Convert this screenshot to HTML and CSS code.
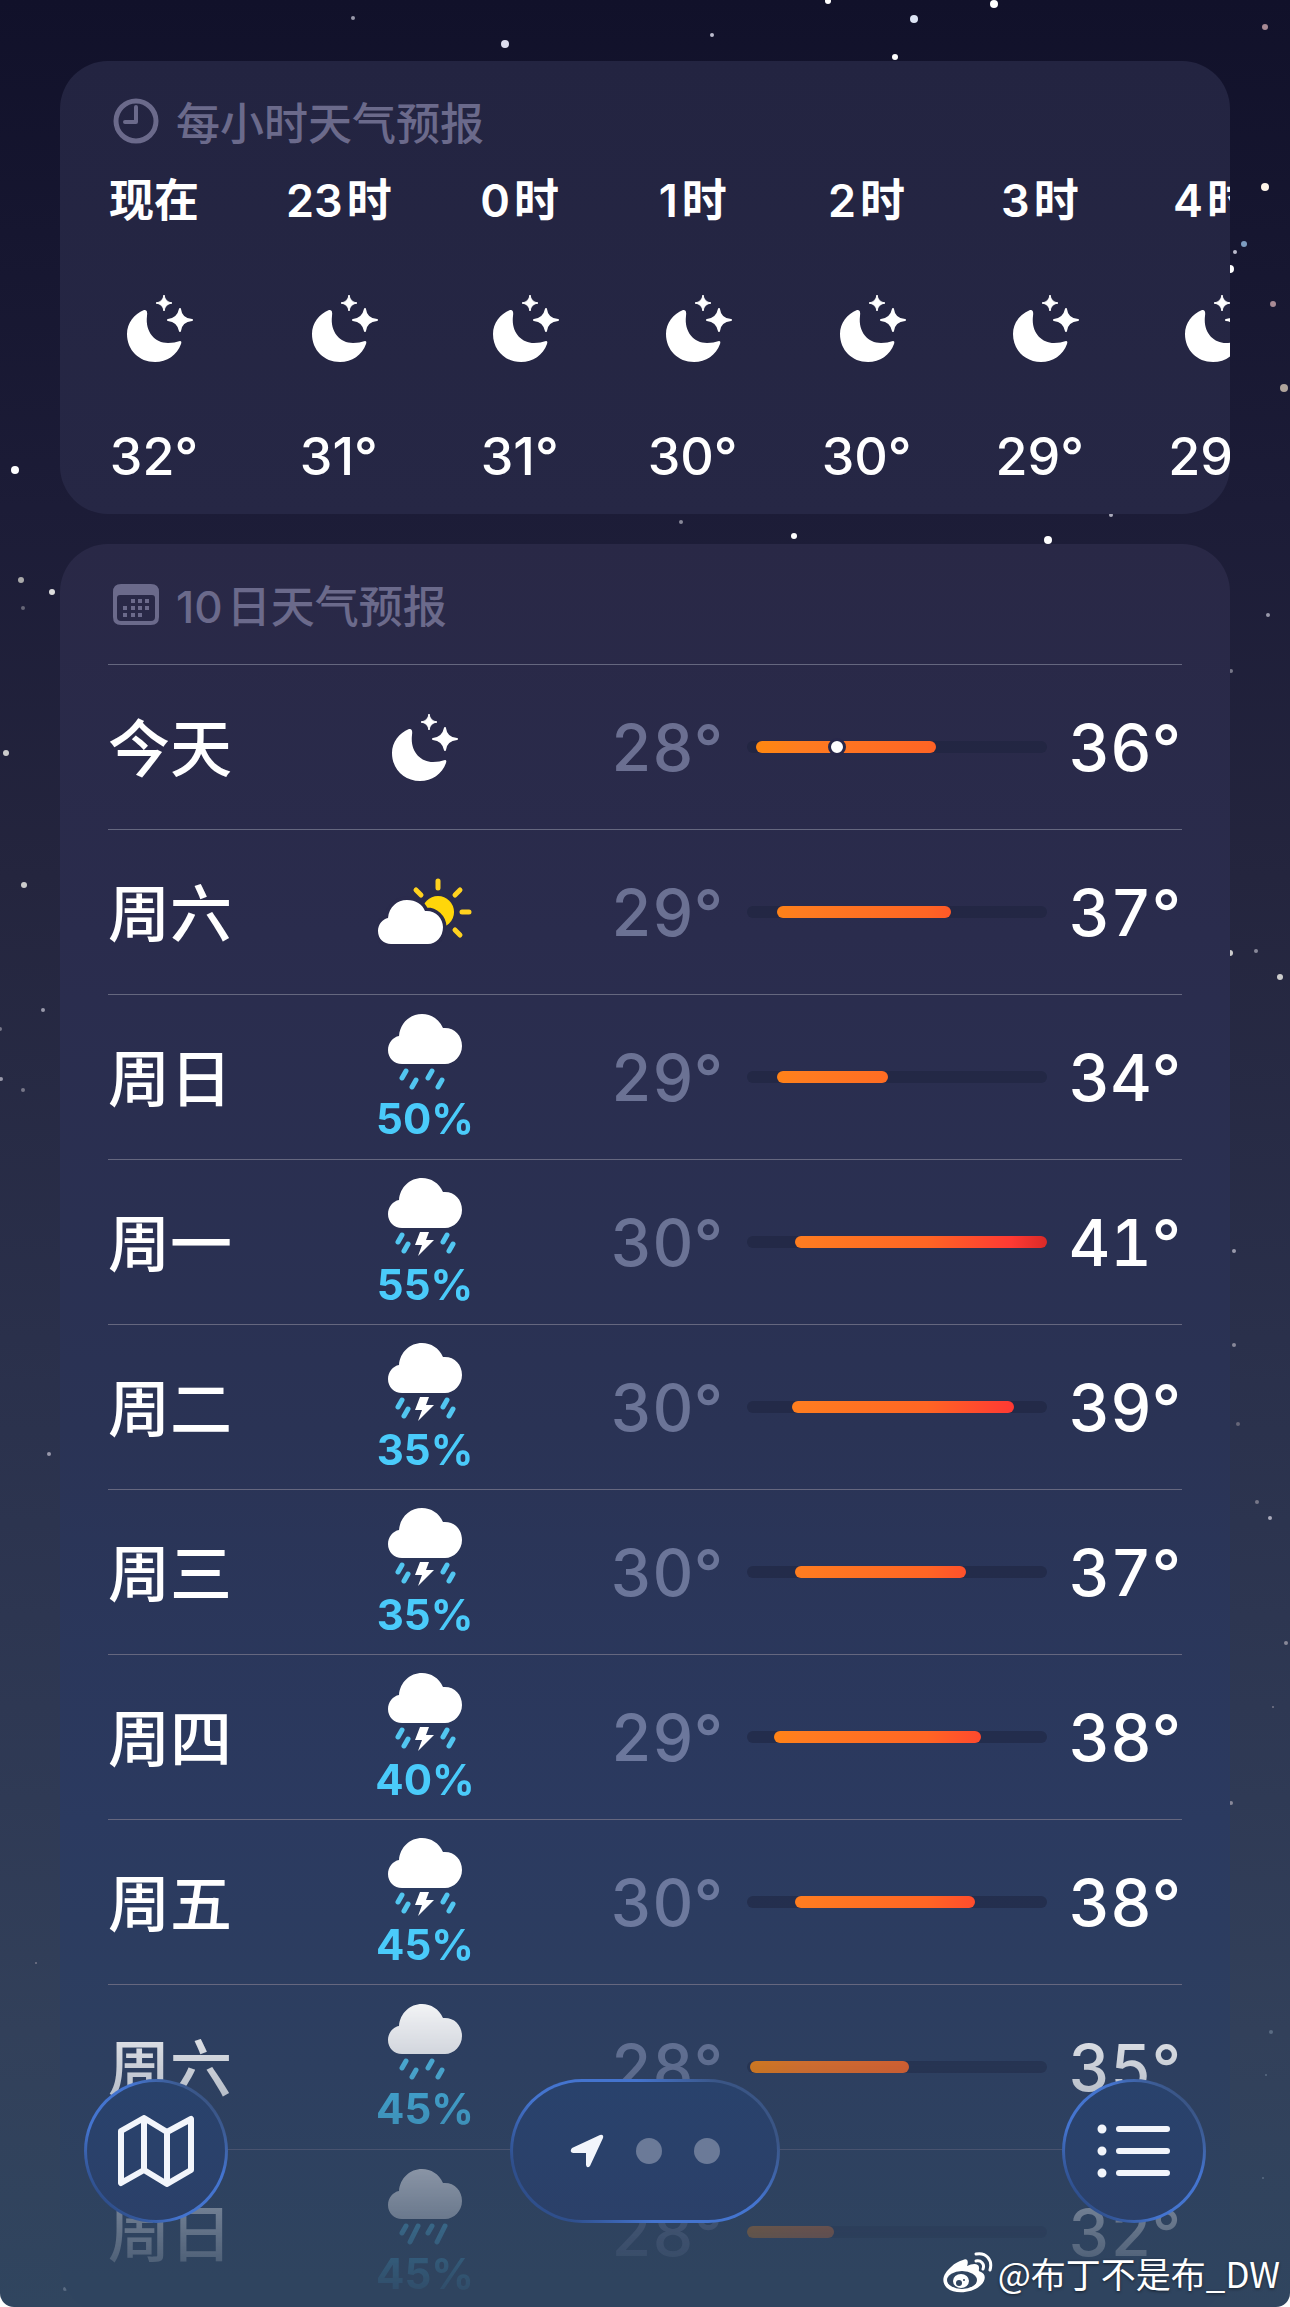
FILE: index.html
```html
<!DOCTYPE html>
<html lang="zh-CN">
<head>
    <meta charset="UTF-8">
    <meta name="viewport" content="width=device-width, initial-scale=1.0">
    <title>天气</title>
    <link rel="stylesheet" href="styles.css">
</head>
<body>

    <!-- icon shapes, reused below -->
    <svg class="defs" aria-hidden="true">
        <symbol id="moon" viewBox="0 0 66 67">
            <path d="M20 17C18 33 28 44 41 44C46 44 49 43 53 42Q55 42 54 45C50 56 40 63 28 63C12 63 0 51 0 35C0 24 7 15 17 11Q21 10 20 17Z" transform="translate(0 4)"/>
            <path d="M37 0Q38 7 45 8Q38 9 37 16Q36 9 29 8Q36 7 37 0Z" stroke="#fff" stroke-width="1"/>
            <path d="M53 14Q54 24 65 25Q54 26 53 36Q51 26 41 25Q51 24 53 14Z" stroke="#fff" stroke-width="2" stroke-linejoin="round"/>
        </symbol>
        <symbol id="cloud" viewBox="0 0 74 50">
            <path d="M14 50C6 50 0 44 0 36C0 29 5 23 11 22C12 9 22 0 34 0C43 0 51 5 55 14C66 13 74 21 74 32C74 42 66 50 57 50Z"/>
        </symbol>
        <symbol id="partly" viewBox="0 0 94 68">
            <g stroke="#ffd21f" stroke-width="5" stroke-linecap="round">
                <path d="M60 3V10M82 12L77 17M84 34H91M82 57L77 52M38 12L43 17"/>
            </g>
            <circle cx="60" cy="34" r="16" fill="#ffd60a"/>
            <path class="cut" d="M13 66C6 66 0 61 0 53C0 46 5 41 10 40C11 29 19 22 29 22C38 22 44 26 47 33C57 32 65 40 65 49C65 59 58 66 50 66Z"/>
            <path fill="#fff" d="M13 66C6 66 0 61 0 53C0 46 5 41 10 40C11 29 19 22 29 22C38 22 44 26 47 33C57 32 65 40 65 49C65 59 58 66 50 66Z"/>
        </symbol>
        <symbol id="rain" viewBox="0 0 74 76">
            <use href="#cloud" width="74" height="50"/>
            <path class="drops" d="M18 57L14 64M28 66L24 73M44 57L40 64M54 66L50 73"/>
        </symbol>
        <symbol id="heavy" viewBox="0 0 74 76">
            <use href="#cloud" width="74" height="50"/>
            <path class="drops" d="M18 57L14 64M30 57L22 73M44 57L40 64M57 57L49 73"/>
        </symbol>
        <symbol id="storm" viewBox="0 0 74 78">
            <use href="#cloud" width="74" height="50"/>
            <path class="drops" d="M14 57L10 64M20 66L16 73M59 57L55 64M65 66L61 73"/>
            <path d="M32 54H41L38 62H46L30 78L34 67H27Z"/>
        </symbol>
    </svg>

    <div class="screen">
        <svg class="stars" id="stars" aria-hidden="true"></svg>

        <main class="cards">
            <section class="card hourly">
                <h2 class="card-title">
                    <svg class="title-icon" viewBox="0 0 46 46"><circle cx="23" cy="23" r="20" fill="none" stroke="currentColor" stroke-width="5"/><path d="M23 9V24H12" fill="none" stroke="currentColor" stroke-width="4" stroke-linecap="round" stroke-linejoin="round"/></svg>
                    每小时天气预报
                </h2>
                <ol class="hours" id="hours"></ol>
            </section>

            <section class="card daily">
                <h2 class="card-title">
                    <svg class="title-icon" viewBox="0 0 46 46"><path fill="currentColor" fill-rule="evenodd" d="M8 3H38Q46 3 46 11V36Q46 44 38 44H8Q0 44 0 36V11Q0 3 8 3ZM7 14Q4 14 4 17V36Q4 40 8 40H38Q42 40 42 36V17Q42 14 39 14Z"/><path d="M18 20h4M25 20h4M32 20h4M10 27h4M18 27h4M25 27h4M32 27h4M10 34h4M18 34h4M25 34h4" stroke="currentColor" stroke-width="4"/></svg>
                    <span>10<span class="unit">日天气预报</span></span>
                </h2>
                <ol class="days" id="days"></ol>
            </section>
        </main>

        <nav class="toolbar">
            <button class="glass round" type="button" aria-label="地图">
                <svg width="76" height="72" viewBox="0 0 76 72" fill="none" stroke="currentColor" stroke-width="6" stroke-linejoin="round"><path d="M3 16L26 3L49 17L73 4V55L49 69L26 55L3 68ZM26 3V55M49 17V69"/></svg>
            </button>
            <div class="glass pager">
                <svg width="34" height="34" viewBox="0 0 34 34" fill="currentColor"><path d="M2 14L30 1Q34 0 33 4L20 32Q17 35 16 31V19H3Q-1 18 2 14Z"/></svg>
                <span class="dot"></span>
                <span class="dot"></span>
            </div>
            <button class="glass round" type="button" aria-label="城市列表">
                <svg width="74" height="54" viewBox="0 0 74 54" fill="none" stroke="currentColor" stroke-width="6" stroke-linecap="round"><path d="M22 5H70M22 27H70M22 49H70"/><path d="M5 5h0M5 27h0M5 49h0" stroke-width="9"/></svg>
            </button>
        </nav>

        <p class="watermark">
            <svg width="50" height="42" viewBox="0 0 50 42"><path fill="#fff" d="M20 8C24 6 26 9 24 14C30 11 37 11 36 17C36 18 35 19 38 20C43 22 43 28 38 33C30 41 12 43 4 36C-3 29 1 21 8 15C12 11 16 9 20 8Z"/><ellipse cx="19" cy="28" rx="15" ry="9" fill="#30445f"/><ellipse cx="18" cy="29" rx="8" ry="7" fill="#fff"/><circle cx="16" cy="31" r="3" fill="#30445f"/><circle cx="21" cy="28" r="1" fill="#30445f"/><path d="M33 2C43 0 50 8 47 18M33 9C38 8 42 12 40 17" fill="none" stroke="#fff" stroke-width="3" stroke-linecap="round"/></svg>
            @布丁不是布_DW
        </p>
    </div>

    <script src="script.js"></script>
</body>
</html>
```
FILE: styles.css
```css
* {
    box-sizing: border-box;
}
html {
    background: #fff;
}
body {
    margin: 0;
    color: #fff;
    font-family: Inter, "Noto Sans CJK SC", sans-serif;
    font-weight: 500;
}
h2, ol, p {
    margin: 0;
    padding: 0;
    list-style: none;
}
svg {
    display: block;
    flex: none;
}
.defs {
    position: absolute;
    width: 0;
    height: 0;
}
.screen {
    position: relative;
    height: 100vh;
    overflow: hidden;
    border-radius: 0 0 14px 14px;
    background: linear-gradient(#11112a 0%, #1c1c37 22%, #24253e 38%, #2a304b 58%, #2f3a55 78%, #32405a 88%, #30455f 100%);
}
.stars {
    position: absolute;
    inset: 0;
    width: 100%;
    height: 100%;
}

/* cards */
.cards {
    position: relative;
    display: flex;
    flex-direction: column;
    gap: 30px;
    padding: 61px 60px 0;
}
.card {
    border-radius: 48px;
    padding: 0 48px;
    overflow: hidden;
}
.hourly {
    height: 453px;
    background: linear-gradient(#232441, #262745);
}
.daily {
    background: linear-gradient(#292846, #2a2c4d 22%, #2a3355 50%, #2b3a60 72%, #2d3f60 86%, #2f445f 98%);
}
.card-title {
    display: flex;
    align-items: center;
    gap: 17px;
    height: 120px;
    padding-left: 5px;
    color: #6b6a8b;
    font-size: 44px;
    font-weight: 500;
}
.title-icon {
    width: 46px;
    height: 46px;
}
.unit {
    margin-left: 4px;
}

/* hourly forecast */
.hours {
    display: flex;
    gap: 84px;
    margin-left: -2px;
}
.hour {
    display: flex;
    flex: none;
    flex-direction: column;
    align-items: center;
    min-width: 88px;
}
.hour:first-child {
    min-width: 96px;
}
.hour-time {
    font-size: 45px;
    font-weight: 600;
    line-height: 40px;
    white-space: nowrap;
}
.hour-icon {
    width: 66px;
    height: 67px;
    margin: 74px 0 67px 12px;
    fill: #fff;
}
.hour-temp {
    font-size: 52px;
    line-height: 56px;
}

/* 10 day forecast */
.days {
    -webkit-mask-image: linear-gradient(#000 1320px, transparent 1650px);
    mask-image: linear-gradient(#000 1320px, transparent 1650px);
}
.day {
    display: grid;
    grid-template-columns: 244px 146px 1fr 300px 135px;
    align-items: center;
    height: 165px;
    border-top: 1px solid #65677f;
}
.day-name {
    padding-bottom: 4px;
    font-size: 62px;
}
.day-weather {
    display: flex;
    flex-direction: column;
    align-items: center;
    fill: #fff;
}
.rain-chance {
    margin: 4px 0 -4px;
    color: #4acbfa;
    font-size: 42px;
    font-weight: 700;
    line-height: 50px;
}
.drops {
    fill: none;
    stroke: #52c6f0;
    stroke-width: 5px;
    stroke-linecap: round;
}
.cut {
    stroke: #2a2b4c;
    stroke-width: 7px;
}
.low, .high {
    font-size: 64px;
    font-variant-numeric: tabular-nums;
    text-align: right;
}
.low {
    padding-right: 24px;
    color: rgba(180, 188, 224, 0.48);
}
.high {
    padding-right: 1px;
}
.track {
    position: relative;
    height: 12px;
    border-radius: 6px;
    background: #1c213c80;
}
.range {
    height: 12px;
    background: linear-gradient(90deg, #ff8a0c, #ff7c20 18%, #ff6524 60%, #ff3a33 88%, #d92a28);
    clip-path: inset(0 calc(100% - var(--to)) 0 var(--from) round 6px);
}
.now {
    position: absolute;
    top: -3px;
    width: 18px;
    height: 18px;
    margin-left: -9px;
    border: 3px solid #28284a;
    border-radius: 50%;
    background: #fff;
}

/* bottom buttons */
.toolbar {
    position: absolute;
    right: 84px;
    bottom: 84px;
    left: 84px;
    display: flex;
    justify-content: space-between;
}
.glass {
    display: flex;
    align-items: center;
    justify-content: center;
    height: 144px;
    padding: 0;
    border: 3px solid transparent;
    border-radius: 72px;
    background:
        linear-gradient(#29426c, #2b4069) padding-box,
        linear-gradient(45deg, #2f4f8c 15%, #4474cf 35%, #4474cf 65%, #3a5585 85%) border-box;
    color: #f2f5fb;
}
.round {
    width: 144px;
}
.pager {
    gap: 32px;
    width: 270px;
}
.dot {
    width: 26px;
    height: 26px;
    border-radius: 50%;
    background: #6b7a98;
}

.watermark {
    position: absolute;
    right: 10px;
    bottom: 9px;
    display: flex;
    align-items: center;
    gap: 5px;
    font-family: "Noto Sans CJK SC", sans-serif;
    font-size: 35px;
    font-weight: 400;
    text-shadow: 0 1px 3px #0008;
}
```
FILE: script.js
```js
const hours = [
    ["现在", 32], ["23时", 31], ["0时", 31], ["1时", 30],
    ["2时", 30], ["3时", 29], ["4时", 29]
];

// name, icon, icon size, rain chance, low, high, bar start, bar end (% of the track)
const days = [
    ["今天", "moon", 66, 67, "", 28, 36, 3, 63],
    ["周六", "partly", 94, 68, "", 29, 37, 10, 68],
    ["周日", "rain", 74, 76, "50%", 29, 34, 10, 47],
    ["周一", "storm", 74, 78, "55%", 30, 41, 16, 100],
    ["周二", "storm", 74, 78, "35%", 30, 39, 15, 89],
    ["周三", "storm", 74, 78, "35%", 30, 37, 16, 73],
    ["周四", "storm", 74, 78, "40%", 29, 38, 9, 78],
    ["周五", "storm", 74, 78, "45%", 30, 38, 16, 76],
    ["周六", "rain", 74, 76, "45%", 28, 35, 1, 54],
    ["周日", "heavy", 74, 76, "45%", 28, 32, 0, 29]
];

// x, y, radius, colour
const stars = [
    [353, 18, 2, "#99a"], [505, 44, 4, "#dde"], [712, 35, 2, "#bbc"], [828, 1, 3, "#fff"],
    [914, 19, 4, "#dde4f4"], [994, 4, 4, "#fff"], [895, 57, 3, "#fff"], [1265, 27, 3, "#a88a94"],
    [1265, 187, 4, "#fff5ea"], [1244, 244, 3, "#7d9cc0"], [1235, 252, 2, "#bbc"], [1230, 269, 4, "#fff"],
    [1273, 304, 3, "#a88a94"], [1284, 388, 4, "#b0a49c"], [15, 470, 4, "#fff"], [681, 522, 2, "#889"],
    [794, 536, 3, "#fff"], [1048, 540, 4, "#fff"], [1111, 515, 2, "#aab"], [21, 580, 3, "#aaa"],
    [23, 608, 2, "#667"], [52, 592, 3, "#ddd"], [6, 753, 3, "#ccc"], [24, 885, 3, "#ccc"],
    [43, 1010, 2, "#99a"], [0, 1029, 2, "#778"], [1, 1079, 2, "#99a"], [23, 1090, 2, "#778"],
    [1230, 953, 3, "#ccc"], [1256, 951, 2, "#889"], [1280, 977, 3, "#ccc"], [1234, 1251, 2, "#99a"],
    [1268, 615, 2, "#99a"], [1231, 671, 2, "#778"], [49, 1454, 2, "#99a"], [1234, 1345, 2, "#889"],
    [1238, 1424, 2, "#667"], [1257, 1502, 2, "#778"], [1270, 1518, 2, "#aab"], [1286, 1643, 2, "#889"],
    [1273, 1707, 1, "#778"], [1231, 1803, 2, "#889"], [36, 1963, 1, "#778"], [1271, 2032, 2, "#5a6b82"],
    [1266, 2075, 1, "#5a6b82"], [1263, 2178, 1, "#5a6b82"], [65, 2289, 2, "#5a6b82"]
];

document.getElementById("hours").innerHTML = hours.map(([time, temp]) => `
    <li class="hour">
        <span class="hour-time">${time.replace("时", '<span class="unit">时</span>')}</span>
        <svg class="hour-icon"><use href="#moon"/></svg>
        <span class="hour-temp">${temp}°</span>
    </li>`).join("");

document.getElementById("days").innerHTML = days.map(([name, icon, w, h, rain, low, high, from, to], i) => `
    <li class="day">
        <span class="day-name">${name}</span>
        <div class="day-weather">
            <svg width="${w}" height="${h}"><use href="#${icon}"/></svg>
            ${rain ? `<span class="rain-chance">${rain}</span>` : ""}
        </div>
        <span class="low">${low}°</span>
        <div class="track">
            <div class="range" style="--from: ${from}%; --to: ${to}%"></div>
            ${i === 0 ? '<span class="now" style="left: 30%"></span>' : ""}
        </div>
        <span class="high">${high}°</span>
    </li>`).join("");

document.getElementById("stars").innerHTML = stars.map(([x, y, r, color]) =>
    `<circle cx="${x}" cy="${y}" r="${r}" fill="${color}"/>`).join("");
```
